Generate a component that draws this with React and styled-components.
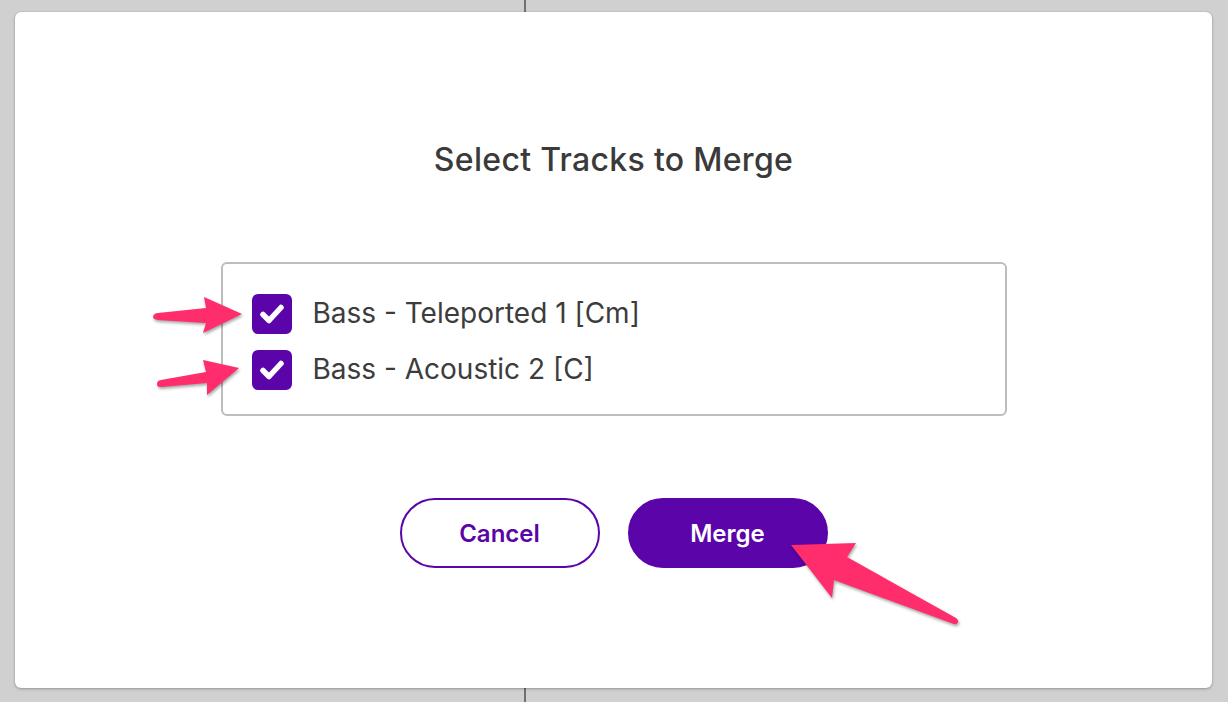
import React from "react";
import styled, { createGlobalStyle } from "styled-components";

const Global = createGlobalStyle`
  html, body { margin: 0; padding: 0; }
  body {
    width: 1228px;
    height: 702px;
    overflow: hidden;
    font-family: Inter, "Open Sans", "Liberation Sans", sans-serif;
    background:
      linear-gradient(to right, transparent 524px, #707070 524px, #707070 526px, transparent 526px),
      #d0d0d0;
  }
`;

const Page = styled.div`
  width: 1228px;
  height: 702px;
  box-sizing: border-box;
  padding: 12px 16px 14px 15px;
  display: flex;
`;

const Modal = styled.div`
  flex: 1;
  background: #fff;
  border-radius: 6px;
  box-shadow: 0 1px 3px rgba(0, 0, 0, 0.28), 0 0 1px rgba(0, 0, 0, 0.2);
  display: flex;
  flex-direction: column;
  align-items: center;
  padding-top: 129px;
  box-sizing: border-box;
`;

const Title = styled.h2`
  margin: 0;
  font-size: 32px;
  line-height: 38px;
  font-weight: 500;
  color: #3a3a3a;
  letter-spacing: 0.3px;
`;

const TrackBox = styled.div`
  margin-top: 83px;
  width: 786px;
  box-sizing: border-box;
  border: 2px solid #bdbdbd;
  border-radius: 6px;
  padding: 30px 29px 24px;
  display: flex;
  flex-direction: column;
  gap: 16px;
`;

const Row = styled.label`
  display: flex;
  align-items: center;
  gap: 21px;
  height: 40px;
`;

const Box = styled.span`
  width: 40px;
  height: 40px;
  border-radius: 6px;
  background: ${(p) => (p.$checked ? "#5a04a9" : "#fff")};
  display: flex;
  align-items: center;
  justify-content: center;
  flex: none;
`;

const TrackName = styled.span`
  font-size: 28px;
  line-height: 34px;
  color: #3c3c3c;
  font-weight: 400;
  margin-top: -3px;
`;

const Buttons = styled.div`
  margin-top: 82px;
  display: flex;
  gap: 28px;
`;

const Button = styled.button`
  width: 200px;
  height: 70px;
  border-radius: 35px;
  box-sizing: border-box;
  font-family: inherit;
  font-size: 24px;
  font-weight: 600;
  border: 2px solid #5a04a9;
  background: ${(p) => (p.$primary ? "#5a04a9" : "#fff")};
  color: ${(p) => (p.$primary ? "#fff" : "#5a04a9")};
  cursor: pointer;
`;

const Annotations = styled.svg`
  position: fixed;
  left: 0;
  top: 0;
  width: 1228px;
  height: 702px;
  pointer-events: none;
  filter: drop-shadow(1px 2px 1.5px rgba(0, 0, 0, 0.35));
`;

const Check = () => (
  <svg width="40" height="40" viewBox="0 0 40 40">
    <polyline
      points="11,20.5 17,26.5 29,13.5"
      fill="none"
      stroke="#fff"
      strokeWidth="5.5"
      strokeLinecap="round"
      strokeLinejoin="round"
    />
  </svg>
);

const tracks = ["Bass - Teleported 1 [Cm]", "Bass - Acoustic 2 [C]"];

export default function App() {
  return (
    <>
      <Global />
      <Page>
        <Modal>
          <Title>Select Tracks to Merge</Title>
          <TrackBox>
            {tracks.map((t) => (
              <Row key={t}>
                <Box $checked>
                  <Check />
                </Box>
                <TrackName>{t}</TrackName>
              </Row>
            ))}
          </TrackBox>
          <Buttons>
            <Button>Cancel</Button>
            <Button $primary>Merge</Button>
          </Buttons>
        </Modal>
      </Page>
      <Annotations viewBox="0 0 1228 702">
        <g fill="#ff2d6b">
          <path d="M153,316.5 Q154,313 158,313 L206,308 L204,297 L242,314 L203,333 L206,323 L158,320 Q153,319.5 153,316.5 Z" />
          <path d="M157,384 Q157,380.5 161,380 L206,372 L203,360 L239,368 L207,395 L207,383 L161,387 Q157,387.5 157,384 Z" />
          <path d="M791,545 L856,543 L847,557 L956,618 Q960,621 957,623.5 Q955,625 951,623 L834,580 L832,598 Z" />
        </g>
      </Annotations>
    </>
  );
}
